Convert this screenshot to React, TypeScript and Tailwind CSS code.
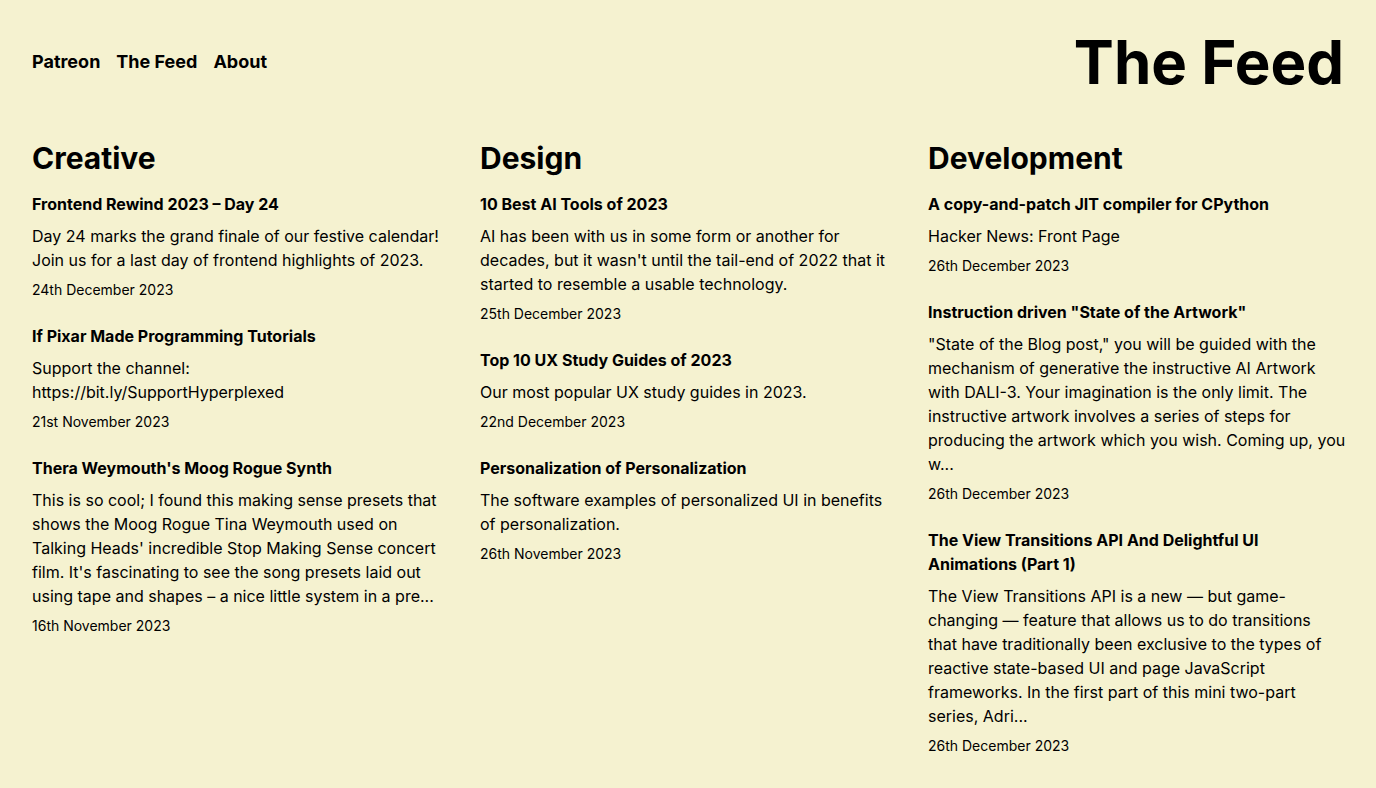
type Entry = { title: string; text: string; date: string };
type Feed = { name: string; entries: Entry[] };

const links = ["Patreon", "The Feed", "About"];

const feeds: Feed[] = [
  {
    name: "Creative",
    entries: [
      {
        title: "Frontend Rewind 2023 – Day 24",
        text: "Day 24 marks the grand finale of our festive calendar! Join us for a last day of frontend highlights of 2023.",
        date: "24th December 2023",
      },
      {
        title: "If Pixar Made Programming Tutorials",
        text: "Support the channel:\nhttps://bit.ly/SupportHyperplexed",
        date: "21st November 2023",
      },
      {
        title: "Thera Weymouth's Moog Rogue Synth",
        text: "This is so cool; I found this making sense presets that shows the Moog Rogue Tina Weymouth used on Talking Heads' incredible Stop Making Sense concert film. It's fascinating to see the song presets laid out using tape and shapes – a nice little system in a pre...",
        date: "16th November 2023",
      },
    ],
  },
  {
    name: "Design",
    entries: [
      {
        title: "10 Best AI Tools of 2023",
        text: "AI has been with us in some form or another for decades, but it wasn't until the tail-end of 2022 that it started to resemble a usable technology.",
        date: "25th December 2023",
      },
      {
        title: "Top 10 UX Study Guides of 2023",
        text: "Our most popular UX study guides in 2023.",
        date: "22nd December 2023",
      },
      {
        title: "Personalization of Personalization",
        text: "The software examples of personalized UI in benefits of personalization.",
        date: "26th November 2023",
      },
    ],
  },
  {
    name: "Development",
    entries: [
      {
        title: "A copy-and-patch JIT compiler for CPython",
        text: "Hacker News: Front Page",
        date: "26th December 2023",
      },
      {
        title: 'Instruction driven "State of the Artwork"',
        text: '"State of the Blog post," you will be guided with the mechanism of generative the instructive AI Artwork with DALI-3. Your imagination is the only limit. The instructive artwork involves a series of steps for producing the artwork which you wish. Coming up, you w...',
        date: "26th December 2023",
      },
      {
        title: "The View Transitions API And Delightful UI Animations (Part 1)",
        text: "The View Transitions API is a new — but game-changing — feature that allows us to do transitions that\u00a0have traditionally been exclusive to the types of reactive state-based UI and page JavaScript frameworks. In the first part of this mini two-part series, Adri...",
        date: "26th December 2023",
      },
    ],
  },
];

function Article({ title, text, date }: Entry) {
  return (
    <article>
      <h3 className="font-bold">
        <a href="#">{title}</a>
      </h3>
      <p className="mt-2 -mr-1 whitespace-pre-line">{text}</p>
      <time className="mt-2 block text-sm">{date}</time>
    </article>
  );
}

export default function App() {
  return (
    <div className="min-h-screen bg-[#f5f2d0] px-8 py-8 font-['Inter',sans-serif] text-base text-black">
      <header className="flex items-center justify-between">
        <nav className="flex gap-4 text-lg font-bold">
          {links.map((link) => (
            <a key={link} href="#">
              {link}
            </a>
          ))}
        </nav>
        <h1 className="text-6xl font-bold">The Feed</h1>
      </header>
      <main className="mt-12 grid grid-cols-3 gap-8">
        {feeds.map((feed) => (
          <section key={feed.name}>
            <h2 className="text-3xl font-bold">{feed.name}</h2>
            <div className="mt-4 flex flex-col gap-6">
              {feed.entries.map((entry) => (
                <Article key={entry.title} {...entry} />
              ))}
            </div>
          </section>
        ))}
      </main>
    </div>
  );
}
